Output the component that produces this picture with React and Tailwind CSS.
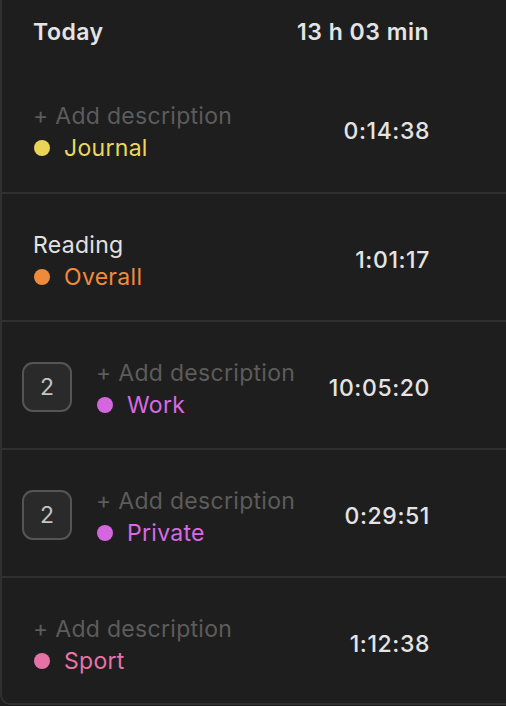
import React from "react";

const rows = [
  { desc: null, label: "Journal", dot: "bg-[#e9d458]", text: "text-[#ecd75c]", time: "0:14:38" },
  { desc: "Reading", label: "Overall", dot: "bg-[#ee8a3b]", text: "text-[#ef8b3c]", time: "1:01:17" },
  { desc: null, label: "Work", dot: "bg-[#d566df]", text: "text-[#d96ae3]", time: "10:05:20", count: 2 },
  { desc: null, label: "Private", dot: "bg-[#d566df]", text: "text-[#d96ae3]", time: "0:29:51", count: 2 },
  { desc: null, label: "Sport", dot: "bg-[#e671a4]", text: "text-[#e873a7]", time: "1:12:38" },
];

export default function App() {
  return (
    <div
      className="w-[506px] h-[706px] bg-[#1e1e1e] overflow-hidden"
      style={{ fontFamily: "Inter, 'Noto Sans', sans-serif" }}
    >
      <div className="h-[705px] border-l-2 border-b-2 border-[#303030] rounded-bl-[10px] flex flex-col">
        <div className="h-[64px] shrink-0 flex items-center justify-between pl-[31px] pr-[77px] text-[23px] font-semibold text-[#e4e4e4] tracking-[0.5px]">
          <span>Today</span>
          <span>13 h 03 min</span>
        </div>
        {rows.map((r, i) => (
          <div
            key={i}
            className={`h-[128px] shrink-0 flex items-center pt-[8px] pr-[77px] ${i > 0 ? "border-t-2 border-[#303030]" : ""} ${r.count ? "pl-[20px]" : "pl-[31px]"}`}
          >
            {r.count ? (
              <div className="w-[50px] h-[50px] mr-[24px] rounded-[11px] border-2 border-[#555555] bg-[#2a2a2a] flex items-center justify-center text-[23px] text-[#c4c4c4] -mt-[4px]">
                {r.count}
              </div>
            ) : null}
            <div className="flex-1 flex flex-col text-[23px] leading-[32px] tracking-[0.3px]">
              {r.desc ? (
                <span className="text-[#e2e2e2]">{r.desc}</span>
              ) : (
                <span className="text-[#5c5c5c]">+ Add description</span>
              )}
              <div className="flex items-center">
                <span className={`w-[16px] h-[16px] rounded-full ml-[1px] mr-[14px] ${r.dot}`} />
                <span className={r.text}>{r.label}</span>
              </div>
            </div>
            <span className="text-[23px] font-medium text-[#e4e4e4] tracking-[0.6px] -mr-[1px] -mt-[2px]">{r.time}</span>
          </div>
        ))}
      </div>
    </div>
  );
}
